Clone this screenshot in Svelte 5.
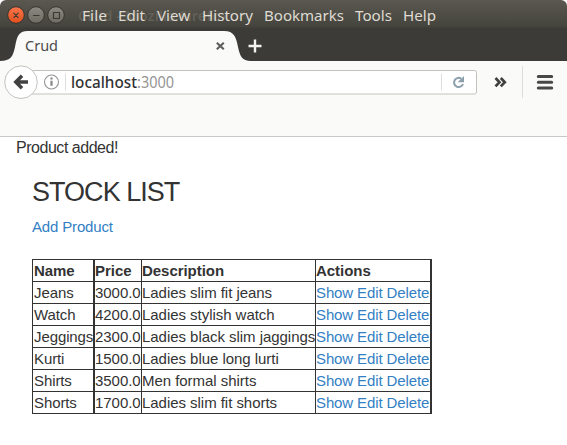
<script>
  const menus = [
    ['File', 82, 25], ['Edit', 118, 27], ['View', 157, 33], ['History', 202, 51],
    ['Bookmarks', 264, 80], ['Tools', 355, 37], ['Help', 403, 33]
  ];
  const products = [
    ['Jeans', '3000.0', 'Ladies slim fit jeans'],
    ['Watch', '4200.0', 'Ladies stylish watch'],
    ['Jeggings', '2300.0', 'Ladies black slim jaggings'],
    ['Kurti', '1500.0', 'Ladies blue long lurti'],
    ['Shirts', '3500.0', 'Men formal shirts'],
    ['Shorts', '1700.0', 'Ladies slim fit shorts']
  ];
</script>

<div class="window">
  <header class="title">
    <svg width="567" height="29" viewBox="0 0 567 29">
      <defs>
        <linearGradient id="red" x2="0" y2="1"><stop stop-color="#f8764b" /><stop offset="1" stop-color="#e4501d" /></linearGradient>
        <linearGradient id="gray" x2="0" y2="1"><stop stop-color="#8b8980" /><stop offset="1" stop-color="#6d6b62" /></linearGradient>
      </defs>
      <g stroke="#35342f" stroke-width="1">
        <circle cx="16" cy="15" r="8.3" fill="url(#red)" />
        <circle cx="36" cy="15" r="8.3" fill="url(#gray)" />
        <circle cx="56" cy="15" r="8.3" fill="url(#gray)" />
      </g>
      <path d="M13.5 12.8l5 5m0-5l-5 5M33 15.5h6.5M53.5 12.5h6v6h-6z" fill="none" stroke="#3c3a34" stroke-width="1.2" />
      <text x="78" y="21" class="ghost" textLength="151" lengthAdjust="spacingAndGlyphs">Crud - Mozilla Firefox</text>
      {#each menus as [label, x, width]}
        <text {x} y="21" class="menu" textLength={width} lengthAdjust="spacingAndGlyphs">{label}</text>
      {/each}
    </svg>
  </header>
  <nav class="tabs">
    <svg width="567" height="33" viewBox="0 0 567 33">
      <path d="M0 32C11 32 13 27 15 18C17 8 18 2 28 2H224C234 2 236 8 238 18C240 27 242 32 251 32V33H0z" fill="#fafaf9" />
      <text x="25" y="22" class="tabname" textLength="33" lengthAdjust="spacingAndGlyphs">Crud</text>
      <path d="M216.8 13.8l7 6.5m0-6.5l-7 6.5" stroke="#5c5c5b" stroke-width="2.1" />
      <path d="M255 10.5v13M248.5 17h13" stroke="#f3f3f0" stroke-width="2.4" />
    </svg>
  </nav>
  <div class="toolbar">
    <svg width="567" height="74" viewBox="0 0 567 74">
      <path d="M25 8.5H474.5Q476.5 8.5 476.5 10.5V30Q476.5 32 474.5 32H25" fill="#fff" stroke="#c4c2bf" />
      <circle cx="21" cy="20.2" r="16.3" fill="#fff" stroke="#c4c2bf" />
      <path d="M28 20H16M22 13.8L15.8 20L22 26.2" fill="none" stroke="#414141" stroke-width="3.5" />
      <circle cx="51.5" cy="20" r="7" fill="none" stroke="#949494" stroke-width="1.1" />
      <path d="M51.5 18.8v5M51.5 15.5v2" stroke="#858585" stroke-width="2.2" />
      <path d="M65.5 11.5v17M441.5 11.5v17" stroke="#ddd" />
      <text x="71" y="26" class="host" textLength="66" lengthAdjust="spacingAndGlyphs">localhost</text>
      <text x="137" y="26" class="port" textLength="37" lengthAdjust="spacingAndGlyphs">:3000</text>
      <path d="M461.3 16.7A4.6 4.6 0 1 0 463 22" fill="none" stroke="#8b9fad" stroke-width="2" />
      <path d="M464 14V20.3H457.7z" fill="#8b9fad" />
      <path d="M495.5 16l4 4.2-4 4.2M500.8 16l4 4.2-4 4.2" fill="none" stroke="#414141" stroke-width="2.7" />
      <path d="M522.5 4v32" stroke="#ddd" />
      <path d="M538.3 14.5h13.4M538.3 20.3h13.4M538.3 26h13.4" stroke="#484848" stroke-width="3" stroke-linecap="round" />
    </svg>
  </div>
  <main>
    <p class="notice">Product added!</p>
    <h1>STOCK LIST</h1>
    <a class="add" href="#add">Add Product</a>
    <table>
      <colgroup><col class="c1" /><col class="c2" /><col class="c3" /><col class="c4" /></colgroup>
      <thead><tr><th>Name</th><th>Price</th><th>Description</th><th>Actions</th></tr></thead>
      <tbody>
        {#each products as [name, price, description]}
          <tr>
            <td>{name}</td><td>{price}</td><td>{description}</td>
            <td><a href="#show">Show</a> <a href="#edit">Edit</a> <a href="#delete">Delete</a></td>
          </tr>
        {/each}
      </tbody>
    </table>
  </main>
</div>

<style>
  :global(body) { margin: 0; background: #fff; }
  .window { width: 567px; height: 445px; overflow: hidden; background: #fff; font-family: "Liberation Sans", Arial, sans-serif; color: #333; }
  svg { display: block; font-family: "Noto Sans", sans-serif; }
  .title { height: 29px; background: linear-gradient(#5a584f, #45443e 90%, #3b3a35); border-radius: 6px 6px 0 0; }
  .ghost { font-size: 14px; font-weight: 600; fill: #625f57; }
  .menu { font-size: 14.5px; fill: #dfdbd2; }
  .tabs { height: 33px; background: linear-gradient(#3c3b37 32px, #fafaf9 32px); }
  .tabname { font-size: 14.5px; fill: #4c4c4c; }
  .toolbar { height: 74px; border-bottom: 1px solid #c9c8c5; background: #fafaf9; }
  .host { font-size: 15.5px; font-weight: 500; fill: #333; }
  .port { font-size: 15.5px; fill: #949494; }
  main { padding-left: 32px; font-size: 15px; }
  .notice { margin: 1px 0 0 -16px; height: 20px; line-height: 20px; font-size: 16px; letter-spacing: -.47px; }
  h1 { margin: 18px 0 0; height: 32px; line-height: 32px; font-size: 27px; font-weight: 400; letter-spacing: -.97px; }
  a { color: #337fc4; text-decoration: none; }
  .add { display: block; margin-top: 9px; height: 20px; line-height: 20px; letter-spacing: -.16px; }
  table { margin-top: 22px; width: 400px; table-layout: fixed; border-collapse: separate; border-spacing: 0; border-top: 1px solid #333; border-left: 1px solid #333; }
  .c1 { width: 62px; }
  .c2 { width: 47px; }
  .c3 { width: 174px; }
  .c4 { width: 116px; }
  th, td { box-sizing: border-box; height: 22px; padding: 0; border: 0 solid #333; border-width: 0 1px 1px 0; line-height: 21px; text-align: left; white-space: nowrap; letter-spacing: -.04px; }
  th:first-child, td:first-child { padding-left: 1px; letter-spacing: -.1px; }
  td:last-child { letter-spacing: -.12px; }
  th:first-child, td:first-child, th:last-child, td:last-child { border-right-width: 2px; }
</style>
